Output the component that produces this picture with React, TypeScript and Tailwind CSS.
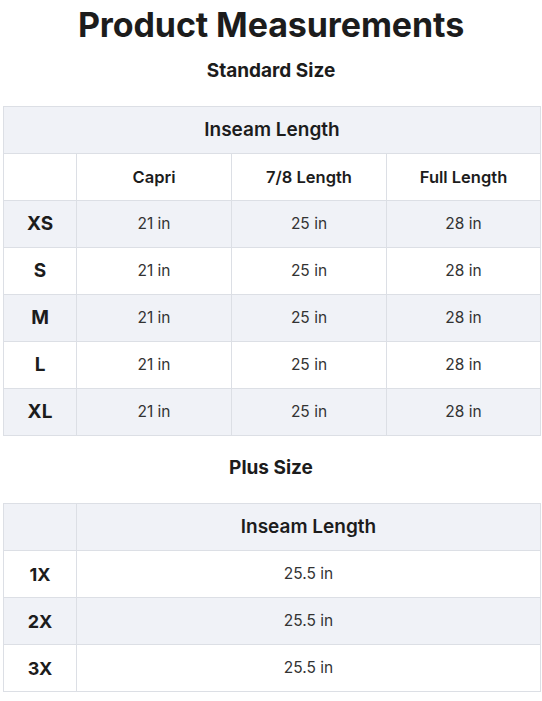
const standardRows = [
  { size: "XS", values: ["21 in", "25 in", "28 in"] },
  { size: "S", values: ["21 in", "25 in", "28 in"] },
  { size: "M", values: ["21 in", "25 in", "28 in"] },
  { size: "L", values: ["21 in", "25 in", "28 in"] },
  { size: "XL", values: ["21 in", "25 in", "28 in"] },
];

const plusRows = [
  { size: "1X", value: "25.5 in" },
  { size: "2X", value: "25.5 in" },
  { size: "3X", value: "25.5 in" },
];

const cell = "h-[47px] border border-[#dcdfe5] text-center align-middle p-0";
const shade = "bg-[#f0f2f7]";

export default function App() {
  return (
    <div className="min-h-screen bg-white px-[3px] pt-[5px] font-['Inter','Liberation_Sans',sans-serif] text-[#1c1c1c]">
      <h1 className="text-center text-[34px] leading-[40px] font-bold tracking-[-0.1px]">
        Product Measurements
      </h1>
      <h2 className="mt-[14px] text-center text-[19px] leading-[24px] font-bold">Standard Size</h2>

      <table className="mt-[23px] w-[538px] table-fixed border-collapse">
        <colgroup>
          <col className="w-[73px]" />
          <col className="w-[155px]" />
          <col className="w-[155px]" />
          <col />
        </colgroup>
        <thead>
          <tr className={shade}>
            <th colSpan={4} className={`${cell} text-[19px] font-semibold`}>
              Inseam Length
            </th>
          </tr>
          <tr>
            <th className={cell} />
            <th className={`${cell} text-[16.5px] font-semibold`}>Capri</th>
            <th className={`${cell} text-[16.5px] font-semibold`}>7/8 Length</th>
            <th className={`${cell} text-[16.5px] font-semibold`}>Full Length</th>
          </tr>
        </thead>
        <tbody>
          {standardRows.map((row, i) => (
            <tr key={row.size} className={i % 2 === 0 ? shade : ""}>
              <td className={`${cell} text-[19px] font-bold`}>{row.size}</td>
              {row.values.map((v, j) => (
                <td key={j} className={`${cell} text-[15.5px] text-[#333]`}>
                  {v}
                </td>
              ))}
            </tr>
          ))}
        </tbody>
      </table>

      <h2 className="mt-[20px] text-center text-[19px] leading-[24px] font-bold">Plus Size</h2>

      <table className="mt-[23px] w-[538px] table-fixed border-collapse">
        <colgroup>
          <col className="w-[73px]" />
          <col />
        </colgroup>
        <thead>
          <tr className={shade}>
            <th className={cell} />
            <th className={`${cell} text-[19px] font-semibold`}>Inseam Length</th>
          </tr>
        </thead>
        <tbody>
          {plusRows.map((row, i) => (
            <tr key={row.size} className={i % 2 === 1 ? shade : ""}>
              <td className={`${cell} text-[18px] font-bold`}>{row.size}</td>
              <td className={`${cell} text-[15.5px] text-[#333]`}>{row.value}</td>
            </tr>
          ))}
        </tbody>
      </table>
    </div>
  );
}
